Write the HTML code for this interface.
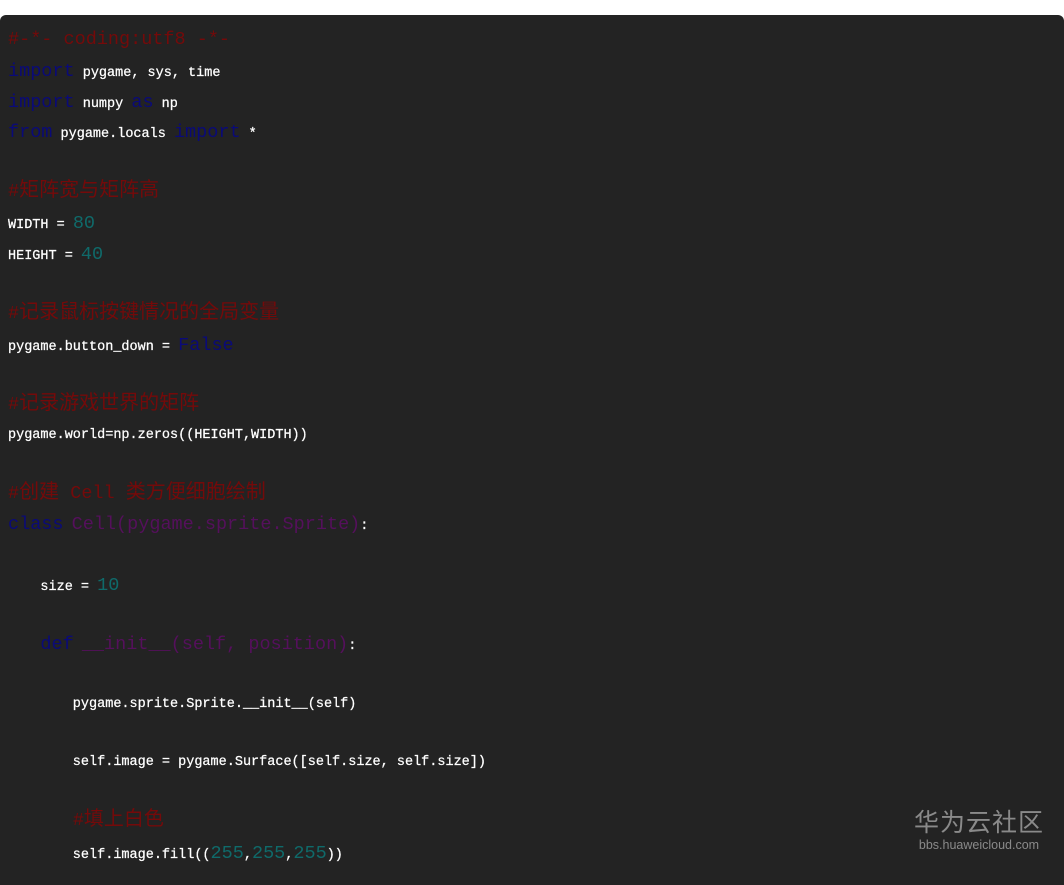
<!DOCTYPE html>
<html><head><meta charset="utf-8"><style>
html,body{margin:0;padding:0;background:#fff;}
body{width:1064px;height:873px;position:relative;overflow:hidden;}
.panel{position:absolute;left:0;top:15px;width:1064px;height:870px;background:#232323;border-radius:6px 6px 0 0;}
.l{position:absolute;left:8px;white-space:pre;font-family:"Liberation Mono",monospace;font-size:13.5px;color:#fff;line-height:20px;-webkit-text-stroke:0.25px #fff;}
.k{color:#0a0a78;font-size:18.5px;-webkit-text-stroke:0;}
.c{color:#740a0a;font-size:18.5px;font-family:"Liberation Mono","Noto Sans CJK SC",monospace;-webkit-text-stroke:0;}
.c b{font-weight:normal;font-size:20px;}
.n{color:#0f6a6a;font-size:18.5px;-webkit-text-stroke:0;}
.p{color:#55105c;font-size:18.5px;-webkit-text-stroke:0;}
.wm{position:absolute;right:20px;top:808px;color:#8a8a8a;font-family:"Liberation Sans","Noto Sans CJK SC",sans-serif;text-align:center;}
.wm .a{font-size:25px;line-height:30px;letter-spacing:1px;}
.wm .b{font-size:12.5px;line-height:14px;}
</style></head><body>
<div class="panel"></div>
<div class="l" style="top:30px"><span class="c">#-*- coding:utf8 -*-</span></div>
<div class="l" style="top:62px"><span class="k">import</span> pygame, sys, time</div>
<div class="l" style="top:93px"><span class="k">import</span> numpy <span class="k">as</span> np</div>
<div class="l" style="top:123px"><span class="k">from</span> pygame.locals <span class="k">import</span> *</div>
<div class="l" style="top:182px"><span class="c">#<b>矩阵宽与矩阵高</b></span></div>
<div class="l" style="top:214px">WIDTH = <span class="n">80</span></div>
<div class="l" style="top:245px">HEIGHT = <span class="n">40</span></div>
<div class="l" style="top:304px"><span class="c">#<b>记录鼠标按键情况的全局变量</b></span></div>
<div class="l" style="top:336px">pygame.button_down = <span class="k">False</span></div>
<div class="l" style="top:395px"><span class="c">#<b>记录游戏世界的矩阵</b></span></div>
<div class="l" style="top:426px">pygame.world=np.zeros((HEIGHT,WIDTH))</div>
<div class="l" style="top:484px"><span class="c">#<b>创建</b> Cell <b>类方便细胞绘制</b></span></div>
<div class="l" style="top:515px"><span class="k">class</span> <span class="p">Cell(pygame.sprite.Sprite)</span>:</div>
<div class="l" style="top:576px">    size = <span class="n">10</span></div>
<div class="l" style="top:635px">    <span class="k">def</span> <span class="p">__init__(self, position)</span>:</div>
<div class="l" style="top:695px">        pygame.sprite.Sprite.__init__(self)</div>
<div class="l" style="top:753px">        self.image = pygame.Surface([self.size, self.size])</div>
<div class="l" style="top:811px">        <span class="c">#<b>填上白色</b></span></div>
<div class="l" style="top:844px">        self.image.fill((<span class="n">255</span>,<span class="n">255</span>,<span class="n">255</span>))</div>
<div class="wm"><div class="a">华为云社区</div><div class="b">bbs.huaweicloud.com</div></div>
</body></html>
